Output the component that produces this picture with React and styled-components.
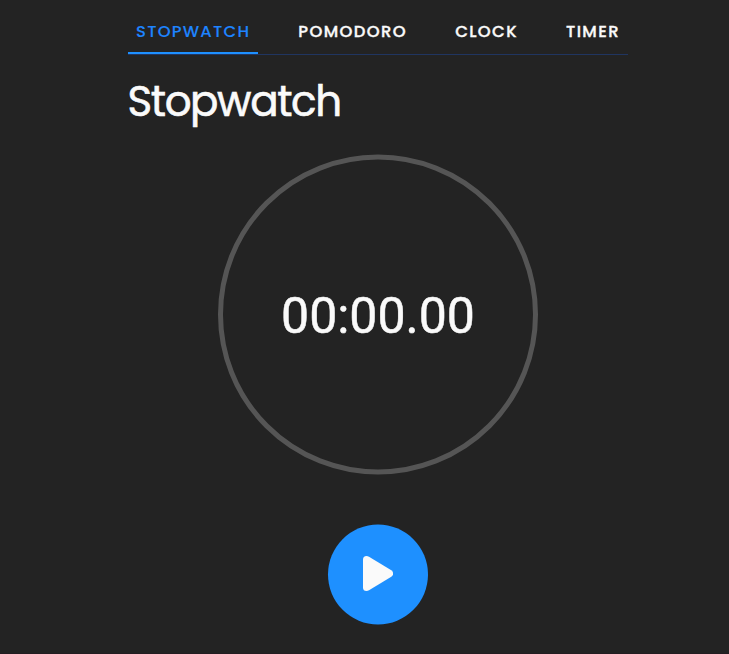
import React from "react";
import styled, { createGlobalStyle } from "styled-components";

const GlobalStyle = createGlobalStyle`
  * { box-sizing: border-box; }
  body { margin: 0; background: #232323; }
`;

const Page = styled.div`
  width: 729px;
  height: 654px;
  padding: 10px 0 0 128px;
  background: #232323;
  border-bottom: 1px solid #231d21;
  color: #fafafa;
  font-family: "Poppins", "Lato", sans-serif;
  overflow: hidden;
`;

const Column = styled.main`
  width: 500px;
  display: flex;
  flex-direction: column;
`;

const Tabs = styled.nav`
  display: flex;
  justify-content: space-between;
  height: 45px;
  border-bottom: 1px solid #203560;
`;

const Tab = styled.a`
  height: 44px;
  padding: 0 8px;
  display: flex;
  align-items: center;
  color: ${(p) => (p.$active ? "#1e84ff" : "#fafafa")};
  border-bottom: 2px solid ${(p) => (p.$active ? "#1e90ff" : "transparent")};
  font-size: 16.4px;
  font-weight: 500;
  letter-spacing: ${(p) => (p.$active ? 1.25 : 1.4)}px;
  -webkit-text-stroke: ${(p) => (p.$active ? 0.1 : 0.35)}px currentColor;
`;

const Title = styled.h1`
  height: 60px;
  margin: 16.5px 0 0 -0.5px;
  font-size: 42px;
  font-weight: 400;
  line-height: 60px;
  letter-spacing: -1.4px;
  -webkit-text-stroke: 0.6px currentColor;
`;

const Dial = styled.section`
  width: 320px;
  height: 320px;
  margin: 22.5px 0 0 90px;
  padding-top: 2px;
  display: flex;
  align-items: center;
  justify-content: center;
  border: 5px solid #555;
  border-radius: 50%;
  transform: translateY(0.5px);
`;

const Time = styled.time`
  font-family: Roboto, sans-serif;
  font-size: 50px;
  line-height: 60px;
  -webkit-text-stroke: 0.5px currentColor;
`;

const PlayButton = styled.button`
  width: 100px;
  height: 100px;
  margin: 50px 0 0 200px;
  padding: 0;
  display: flex;
  align-items: center;
  justify-content: center;
  border: 0;
  border-radius: 50%;
  background: #1e90ff;
  color: #fafafa;
  transform: translateY(0.5px);
`;

const PlayIcon = styled.svg`
  width: 30px;
  height: 36px;
  margin-bottom: 3px;
`;

const tabs = [
  { name: "STOPWATCH", active: true },
  { name: "POMODORO" },
  { name: "CLOCK" },
  { name: "TIMER" },
];

export default function App() {
  return (
    <Page>
      <GlobalStyle />
      <Column>
        <Tabs>
          {tabs.map((t) => (
            <Tab key={t.name} $active={t.active}>{t.name}</Tab>
          ))}
        </Tabs>
        <Title>Stopwatch</Title>
        <Dial><Time>00:00.00</Time></Dial>
        <PlayButton aria-label="Start">
          <PlayIcon viewBox="0 0 30 36" fill="currentColor">
            <path d="M0 4Q0 .5 3.5 .5Q4.700 .5 6 1.200L28.300 14.700Q30.200 16 30.200 18Q30.200 20 28.300 21.300L6 34.800Q4.700 35.500 3.500 35.500Q0 35.500 0 32Z" />
          </PlayIcon>
        </PlayButton>
      </Column>
    </Page>
  );
}
